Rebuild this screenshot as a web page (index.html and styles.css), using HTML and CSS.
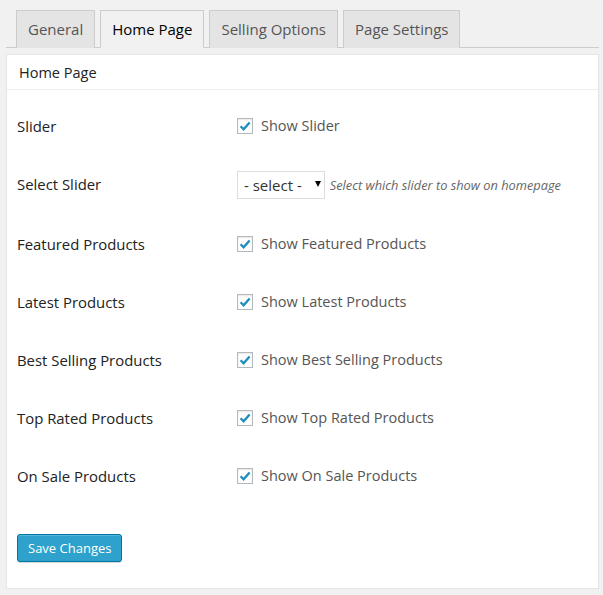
FILE: index.html
```html
<!DOCTYPE html>
<html lang="en">
<head>
  <meta charset="UTF-8">
  <title>Theme Options - Home Page</title>
  <link rel="stylesheet" href="styles.css">
</head>
<body>
  <div class="wrap">
    <h2 class="nav-tab-wrapper">
      <a class="nav-tab" href="#">General</a>
      <a class="nav-tab nav-tab-active" href="#">Home Page</a>
      <a class="nav-tab" href="#">Selling Options</a>
      <a class="nav-tab" href="#">Page Settings</a>
    </h2>

    <div class="postbox">
      <h3 class="hndle">Home Page</h3>
      <div class="inside">
        <table class="form-table">
          <tr>
            <th>Slider</th>
            <td><label class="check"><span class="box"><svg viewBox="0 0 16 16" width="16" height="16"><path d="M3.6 8.2 L6.6 11.2 L12.6 4.4" /></svg></span>Show Slider</label></td>
          </tr>
          <tr class="select-row">
            <th>Select Slider</th>
            <td>
              <span class="select"><select><option>- select -</option></select></span>
              <span class="description">Select which slider to show on homepage</span>
            </td>
          </tr>
          <tr>
            <th>Featured Products</th>
            <td><label class="check"><span class="box"><svg viewBox="0 0 16 16" width="16" height="16"><path d="M3.6 8.2 L6.6 11.2 L12.6 4.4" /></svg></span>Show Featured Products</label></td>
          </tr>
          <tr>
            <th>Latest Products</th>
            <td><label class="check"><span class="box"><svg viewBox="0 0 16 16" width="16" height="16"><path d="M3.6 8.2 L6.6 11.2 L12.6 4.4" /></svg></span>Show Latest Products</label></td>
          </tr>
          <tr>
            <th>Best Selling Products</th>
            <td><label class="check"><span class="box"><svg viewBox="0 0 16 16" width="16" height="16"><path d="M3.6 8.2 L6.6 11.2 L12.6 4.4" /></svg></span>Show Best Selling Products</label></td>
          </tr>
          <tr>
            <th>Top Rated Products</th>
            <td><label class="check"><span class="box"><svg viewBox="0 0 16 16" width="16" height="16"><path d="M3.6 8.2 L6.6 11.2 L12.6 4.4" /></svg></span>Show Top Rated Products</label></td>
          </tr>
          <tr>
            <th>On Sale Products</th>
            <td><label class="check"><span class="box"><svg viewBox="0 0 16 16" width="16" height="16"><path d="M3.6 8.2 L6.6 11.2 L12.6 4.4" /></svg></span>Show On Sale Products</label></td>
          </tr>
        </table>
        <p class="submit">
          <button class="button-primary">Save Changes</button>
        </p>
      </div>
    </div>
  </div>
</body>
</html>
```

FILE: styles.css
```css
body {
  margin: 0;
  background-color: #f1f1f1;
  color: #444;
  font-family: "Open Sans", sans-serif;
  font-size: 13px;
}
.wrap {
  margin: 0 4px 0 6px;
  padding-top: 10px;
}
.nav-tab-wrapper {
  display: flex;
  margin: 0;
  padding: 0 0 0 10px;
  border-bottom: 1px solid #ccc;
  font-weight: normal;
}
.nav-tab {
  display: block;
  margin: 0 5px -1px 0;
  padding: 5px 11px;
  border: 1px solid #ccc;
  border-bottom: none;
  background-color: #e4e4e4;
  color: #555;
  font-size: 15px;
  line-height: 26px;
  text-decoration: none;
}
.nav-tab-active {
  background-color: #f1f1f1;
  border-bottom: 1px solid #f1f1f1;
  color: #000;
}
.postbox {
  margin-top: 6px;
  background-color: #fff;
  border: 1px solid #e5e5e5;
  box-shadow: 0 1px 1px rgba(0, 0, 0, 0.04);
}
.hndle {
  margin: 0;
  padding: 7px 12px 6px;
  border-bottom: 1px solid #eee;
  font-size: 14.5px;
  font-weight: normal;
  line-height: 21px;
  color: #222;
}
.inside {
  padding: 0 10px 26px;
}
.form-table {
  width: 100%;
  margin-top: 7px;
  border-collapse: collapse;
}
.form-table th {
  width: 200px;
  padding: 20px 10px 20px 0;
  text-align: left;
  vertical-align: top;
  font-size: 14.9px;
  font-weight: normal;
  line-height: 18px;
  color: #222;
}
.form-table td {
  padding: 15px 10px;
  vertical-align: middle;
  font-size: 14.5px;
  line-height: 18px;
}
.select-row th {
  padding-top: 20px;
  padding-bottom: 22px;
}
.check {
  display: flex;
  align-items: center;
  color: #555;
}
.box {
  display: inline-block;
  width: 14px;
  height: 14px;
  margin-right: 8px;
  border: 1px solid #b4b9be;
  background-color: #fff;
  box-shadow: inset 0 1px 2px rgba(0, 0, 0, 0.1);
  position: relative;
}
.box svg {
  position: absolute;
  left: -1px;
  top: -1px;
}
.box path {
  fill: none;
  stroke: #1e8cbe;
  stroke-width: 2.3;
}
.select {
  display: inline-block;
  position: relative;
  vertical-align: middle;
}
.select select {
  appearance: none;
  -webkit-appearance: none;
  width: 88px;
  height: 28px;
  padding: 0 18px 0 6px;
  border: 1px solid #ddd;
  border-radius: 0;
  background-color: #fff;
  color: #333;
  font-family: "Open Sans", sans-serif;
  font-size: 15px;
}
.select::after {
  content: "";
  position: absolute;
  right: 4px;
  top: 10px;
  border-left: 3px solid transparent;
  border-right: 3px solid transparent;
  border-top: 6px solid #000;
}
.description {
  vertical-align: middle;
  margin-left: 1px;
  font-size: 12.8px;
  font-style: italic;
  color: #666;
}
.submit {
  margin: 19px 0 0;
  padding: 10px 0 0;
}
.button-primary {
  height: 28px;
  padding: 0 10px 1px;
  border: 1px solid #0074a2;
  border-radius: 3px;
  background-color: #2ea2cc;
  box-shadow: inset 0 1px 0 rgba(120, 200, 230, 0.5), 0 1px 0 rgba(0, 0, 0, 0.15);
  color: #fff;
  font-family: "Open Sans", sans-serif;
  font-size: 13px;
  line-height: 26px;
  cursor: pointer;
}
```
